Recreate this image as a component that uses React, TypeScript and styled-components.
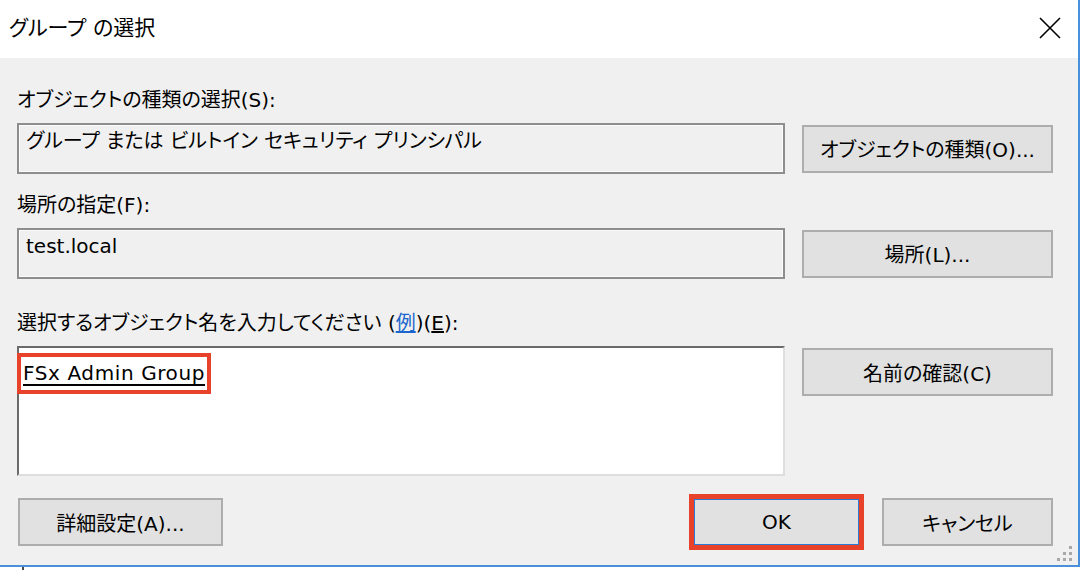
import React from 'react';
import styled, { createGlobalStyle } from 'styled-components';

const FONT = `"DejaVu Sans", "Noto Sans CJK JP", sans-serif`;

const Global = createGlobalStyle`
  html, body { margin: 0; padding: 0; background: #ffffff; }
  body { font-family: ${FONT}; color: #000; font-feature-settings: "palt" 1; }
  * { box-sizing: border-box; }
`;

const Page = styled.div`
  width: 1092px;
  height: 570px;
  overflow: hidden;
  background: #ffffff;
  display: flex;
  flex-direction: column;
`;

const Window = styled.div`
  width: 1080px;
  height: 567px;
  flex-shrink: 0;
  border-right: 2px solid #4a8fdc;
  border-bottom: 2px solid #4a8fdc;
  display: flex;
  flex-direction: column;
`;

const TitleBar = styled.div`
  height: 58px;
  flex-shrink: 0;
  background: #ffffff;
  display: flex;
  align-items: center;
  justify-content: space-between;
  padding: 0 17px 3px 9px;
`;

const Title = styled.div`
  font-size: 21px;
  line-height: 24px;
`;

const CloseIcon = styled.svg`
  width: 22px;
  height: 22px;
  display: block;
`;

const Body = styled.div`
  flex: 1;
  position: relative;
  background: #f0f0f0;
  padding: 30px 25px 0 17px;
  display: flex;
  flex-direction: column;
`;

const Section = styled.div<{ $gap: number }>`
  margin-top: ${(p) => p.$gap}px;
  display: grid;
  grid-template-columns: 768px 251px;
  column-gap: 17px;
  row-gap: 11px;
`;

const Label = styled.div`
  grid-column: 1 / 2;
  font-size: 20px;
  line-height: 24px;
  height: 24px;
  white-space: nowrap;
`;

const Field = styled.div<{ $latin?: boolean }>`
  grid-column: 1 / 2;
  height: 51px;
  border: 2px solid #8e8e8e;
  box-shadow: inset 0 0 0 1px #fbfbfb;
  background: #f0f0f0;
  padding: 3px 7px;
  font-size: 20px;
  line-height: 26px;
  white-space: nowrap;
`;

const TextArea = styled.div`
  grid-column: 1 / 2;
  height: 130px;
  background: #ffffff;
  border-top: 2px solid #6a6a6a;
  border-left: 2px solid #6a6a6a;
  border-right: 2px solid #dedede;
  border-bottom: 2px solid #dedede;
  padding: 9px 2px;
`;

const Entry = styled.span`
  display: inline-block;
  padding: 0 2px;
  height: 33px;
  font-size: 20px;
  line-height: 33px;
  text-decoration: underline;
  text-decoration-thickness: 2px;
  text-underline-offset: 4px;
  outline: 4px solid #e8432a;
  letter-spacing: 0.6px;
`;

const Button = styled.button<{ $w?: number; $top?: number; $default?: boolean }>`
  grid-column: 2 / 3;
  align-self: ${(p) => (p.$top !== undefined ? 'start' : 'center')};
  margin-top: ${(p) => p.$top ?? 0}px;
  width: ${(p) => (p.$w ? `${p.$w}px` : '100%')};
  height: 48px;
  background: #e1e1e1;
  border: 2px solid ${(p) => (p.$default ? '#2c7ad6' : '#adadad')};
  outline: ${(p) => (p.$default ? '5px solid #e8432a' : 'none')};
  outline-offset: -1px;
  font-family: ${FONT};
  font-feature-settings: "palt" 1;
  font-size: 20px;
  color: #000;
  padding: 0;
  white-space: nowrap;
  cursor: default;
`;

const Link = styled.span`
  color: #1a66cc;
  text-decoration: underline;
`;

const Mnemonic = styled.span`
  text-decoration: underline;
`;

const BottomRow = styled.div`
  margin-top: 22px;
  display: flex;
  align-items: center;
  padding-left: 1px;
`;

const Spacer = styled.div`
  flex: 1;
`;

const ButtonGap = styled.div`
  width: 22px;
  flex-shrink: 0;
`;

const Grip = styled.svg`
  position: absolute;
  right: 5px;
  bottom: 4px;
  width: 16px;
  height: 16px;
`;

const BelowStrip = styled.div`
  height: 3px;
  display: flex;
  background: #ffffff;
`;

const StripLine = styled.div`
  margin-left: 22px;
  width: 2px;
  background: #4a4a4a;
`;

export default function App() {
  return (
    <>
      <Global />
      <Page>
        <Window>
          <TitleBar>
            <Title>グループ の選択</Title>
            <CloseIcon viewBox="0 0 22 22">
              <path d="M1 1 L21 21 M21 1 L1 21" stroke="#000" strokeWidth="1.6" fill="none" />
            </CloseIcon>
          </TitleBar>
          <Body>
            <Section $gap={0}>
              <Label>オブジェクトの種類の選択(S):</Label>
              <Field>グループ または ビルトイン セキュリティ プリンシパル</Field>
              <Button>オブジェクトの種類(O)...</Button>
            </Section>
            <Section $gap={19}>
              <Label>場所の指定(F):</Label>
              <Field $latin>test.local</Field>
              <Button>場所(L)...</Button>
            </Section>
            <Section $gap={32}>
              <Label>
                選択するオブジェクト名を入力してください (<Link>例</Link>)(<Mnemonic>E</Mnemonic>):
              </Label>
              <TextArea>
                <Entry>FSx Admin Group</Entry>
              </TextArea>
              <Button $top={2}>名前の確認(C)</Button>
            </Section>
            <BottomRow>
              <Button $w={205}>詳細設定(A)...</Button>
              <Spacer />
              <Button $w={167} $default>OK</Button>
              <ButtonGap />
              <Button $w={171}>キャンセル</Button>
            </BottomRow>
            <Grip viewBox="0 0 16 16">
              {[
                [12, 1],
                [6, 7],
                [12, 7],
                [0, 13],
                [6, 13],
                [12, 13],
              ].map(([x, y], i) => (
                <rect key={i} x={x} y={y} width="3" height="3" fill="#a8a8a8" />
              ))}
            </Grip>
          </Body>
        </Window>
        <BelowStrip>
          <StripLine />
        </BelowStrip>
      </Page>
    </>
  );
}
